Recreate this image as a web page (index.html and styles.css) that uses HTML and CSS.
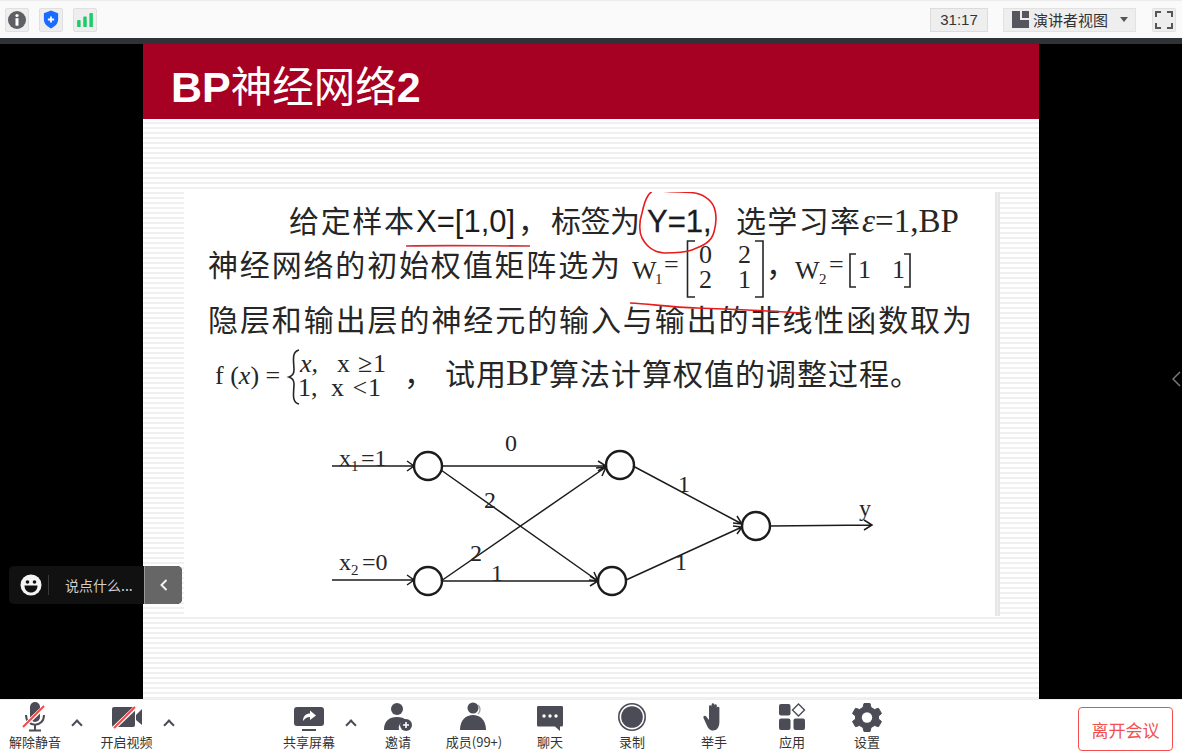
FILE: index.html
```html
<!DOCTYPE html>
<html lang="zh-CN">

<head>
    <meta charset="UTF-8">
    <meta name="viewport" content="width=device-width, initial-scale=1.0">
    <title>Meeting</title>
    <link rel="stylesheet" href="styles.css">
</head>

<body>
    <div class="topbar">
        <div class="topbar-left">
            <div class="top-btn">
                <svg width="20" height="20" viewBox="0 0 20 20">
                    <circle cx="10" cy="10" r="9" fill="#5f6066" />
                    <circle cx="10" cy="5.5" r="1.6" fill="#fff" />
                    <rect x="8.5" y="8.2" width="3" height="7.5" fill="#fff" />
                </svg>
            </div>
            <div class="top-btn">
                <svg width="16" height="19" viewBox="0 0 18 20">
                    <path d="M9 0 L17 3 V10 C17 15 13 18 9 20 C5 18 1 15 1 10 V3 Z" fill="#1a6bff" />
                    <path d="M9 6.5 V13.5 M5.5 10 H12.5" stroke="#fff" stroke-width="2" />
                </svg>
            </div>
            <div class="top-btn">
                <svg width="16" height="14" viewBox="0 0 18 16">
                    <rect x="0" y="8" width="4" height="8" rx="1" fill="#1ecb6b" />
                    <rect x="7" y="4" width="4" height="12" rx="1" fill="#1ecb6b" />
                    <rect x="14" y="0" width="4" height="16" rx="1" fill="#1ecb6b" />
                </svg>
            </div>
        </div>
        <div class="topbar-right">
            <div class="timer">31:17</div>
            <div class="view-select">
                <svg width="17" height="17" viewBox="0 0 17 17">
                    <path d="M0 0 H8 V9 H17 V17 H0 Z" fill="#56575e" />
                    <rect x="10" y="0" width="7" height="7" fill="#56575e" />
                </svg>
                <span>演讲者视图</span>
                <i class="select-caret"></i>
            </div>
            <div class="top-btn">
                <svg width="18" height="18" viewBox="0 0 18 18" fill="none" stroke="#55565c" stroke-width="2">
                    <path d="M1 6 V1 H6 M12 1 H17 V6 M17 12 V17 H12 M6 17 H1 V12" />
                </svg>
            </div>
        </div>
    </div>

    <div class="stage">
        <div class="slide">
            <div class="slide-head">
                <h1 class="slide-title"><b>BP</b>神经网络<b>2</b></h1>
            </div>
            <div class="paper">
                <svg class="paper-art" width="811" height="424" viewBox="184 192 811 424">
                    <!-- 题目文字 -->
                    <text class="cn" x="289" y="232" textLength="125">给定样本</text>
                    <text class="sans" x="416" y="232">X=[1,0]</text>
                    <text class="cn" x="518" y="232">，</text>
                    <text class="cn" x="551" y="232" textLength="89">标签为</text>
                    <text class="sans strong" x="647" y="232">Y=1,</text>
                    <text class="cn" x="736" y="232" textLength="124">选学习率</text>
                    <text class="serif big" x="862" y="232"><tspan font-style="italic">ε</tspan>=1,BP</text>

                    <text class="cn" x="208" y="276" textLength="412">神经网络的初始权值矩阵选为</text>
                    <text class="serif math" x="632" y="279">W</text>
                    <text class="serif sub" x="655" y="284">1</text>
                    <text class="serif math" x="664" y="273">=</text>
                    <path class="bracket" d="M695 241 H687.5 V297 H695" />
                    <text class="serif math" x="699" y="263">0</text>
                    <text class="serif math" x="738" y="263">2</text>
                    <text class="serif math" x="699" y="288">2</text>
                    <text class="serif math" x="738" y="288">1</text>
                    <path class="bracket" d="M755 241 H763 V297 H755" />
                    <text class="cn" x="766" y="276">，</text>
                    <text class="serif math" x="795" y="279">W</text>
                    <text class="serif sub" x="819" y="284">2</text>
                    <text class="serif math" x="829" y="273">=</text>
                    <path class="bracket" d="M856 254 H850 V287 H856" />
                    <text class="serif math" x="858" y="278">1</text>
                    <text class="serif math" x="892" y="278">1</text>
                    <path class="bracket" d="M904 254 H910 V287 H904" />

                    <text class="cn" x="208" y="331" textLength="764">隐层和输出层的神经元的输入与输出的非线性函数取为</text>

                    <text class="serif math" x="215" y="384">f (<tspan font-style="italic">x</tspan>) =</text>
                    <path class="bracket" d="M299 350 C291 352 294 362 294 370 C294 374 292 376 289 377 C292 378 294 380 294 384 C294 392 291 402 299 404" />
                    <text class="serif math" x="300" y="372" font-style="italic">x,</text>
                    <text class="serif math" x="337" y="372" textLength="49">x ≥1</text>
                    <text class="serif math" x="298" y="396">1,</text>
                    <text class="serif math" x="331" y="396" textLength="50">x &lt;1</text>
                    <text class="cn" x="404" y="385">，</text>
                    <text class="cn" x="445" y="385" textLength="61">试用</text>
                    <text class="serif wide" x="506" y="385">BP</text>
                    <text class="cn" x="549" y="385" textLength="371">算法计算权值的调整过程。</text>

                    <!-- 网络图 -->
                    <g class="net">
                        <circle cx="428" cy="466" r="14" />
                        <circle cx="428" cy="581" r="14" />
                        <circle cx="620" cy="465" r="14" />
                        <circle cx="612" cy="581" r="14" />
                        <circle cx="756" cy="526" r="14" />
                        <path d="M332 466 H414 M407 461 L414 466 L407 471" />
                        <path d="M332 580 H414 M407 575 L414 580 L407 585" />
                        <path d="M442 466 H606 M598 461 L606 466 L598 471" />
                        <path d="M441 470 L598 581 M589 580 L598 581 L594 572" />
                        <path d="M441 581 L606 467 M596 468 L606 467 L602 476" />
                        <path d="M442 581 H598 M590 576 L598 581 L590 586" />
                        <path d="M633 466 L742 524 M733 523 L742 524 L737 516" />
                        <path d="M626 580 L742 527 M733 526 L742 527 L737 534" />
                        <path d="M770 526 L872 525 M864 520 L872 525 L864 530" />
                    </g>
                    <text class="serif label" x="339" y="466">x</text>
                    <text class="serif tiny" x="351" y="471">1</text>
                    <text class="serif label" x="361" y="466">=1</text>
                    <text class="serif label" x="339" y="570">x</text>
                    <text class="serif tiny" x="351" y="575">2</text>
                    <text class="serif label" x="362" y="570">=0</text>
                    <text class="serif label" x="505" y="451">0</text>
                    <text class="serif label" x="484" y="508">2</text>
                    <text class="serif label" x="470" y="561">2</text>
                    <text class="serif label" x="491" y="581">1</text>
                    <text class="serif label" x="678" y="492">1</text>
                    <text class="serif label" x="675" y="570">1</text>
                    <text class="serif label" x="859" y="516">y</text>

                    <!-- 红笔批注 -->
                    <g class="ink">
                        <path d="M406 246 C450 245 490 246 530 246" stroke="#d22f3a" />
                        <path d="M655 190 C647 192 644 204 642 213 C639 222 639 232 642 238 C647 247 653 252 664 253 C675 253 684 253 692 250 C702 246 711 243 714 232 C717 222 717 209 711 202 C704 194 696 192 680 192 C670 192 660 191 655 190" />
                        <path d="M630 303 C650 304 670 307 697 308 C730 309 770 311 801 313" />
                    </g>
                </svg>
                <div class="paper-edge"></div>
            </div>
        </div>

        <div class="chat-pill">
            <svg width="22" height="22" viewBox="0 0 22 22">
                <circle cx="11" cy="11" r="10.5" fill="#f4f4f4" />
                <circle cx="7.5" cy="8" r="1.8" fill="#111" />
                <circle cx="14.5" cy="8" r="1.8" fill="#111" />
                <path d="M4.5 11.5 H17.5 C17.5 16 14.5 18.5 11 18.5 C7.5 18.5 4.5 16 4.5 11.5 Z" fill="#111" />
            </svg>
            <span class="chat-text">说点什么...</span>
            <div class="chat-toggle">
                <svg width="8" height="12" viewBox="0 0 8 12" fill="none" stroke="#f2f2f2" stroke-width="2">
                    <path d="M6.5 1 L1.5 6 L6.5 11" />
                </svg>
            </div>
        </div>

        <svg class="side-arrow" width="9" height="16" viewBox="0 0 9 16" fill="none" stroke="#77797e" stroke-width="1.5">
            <path d="M8 1 L1 8 L8 15" />
        </svg>
    </div>

    <div class="toolbar">
        <div class="tool-group left-group">
            <div class="tool">
                <svg width="26" height="30" viewBox="0 0 26 30">
                    <rect x="8" y="0" width="10" height="20" rx="5" fill="#4b4c55" />
                    <path d="M4 13 C4 26 22 26 22 13" fill="none" stroke="#4b4c55" stroke-width="2" />
                    <path d="M13 23 V28 M7 28.5 H19" stroke="#4b4c55" stroke-width="2" />
                    <path d="M1 25 L23 4" stroke="#fff" stroke-width="4" />
                    <path d="M1 25 L22 4" stroke="#f04848" stroke-width="2" />
                </svg>
                <span>解除静音</span>
            </div>
            <div class="caret"></div>
            <div class="tool tool-video">
                <svg width="30" height="30" viewBox="0 0 30 30">
                    <rect x="0" y="5" width="23" height="20" rx="2" fill="#4b4c55" />
                    <path d="M24 13 L30 7 V23 L24 18 Z" fill="#4b4c55" />
                    <path d="M2 26 L24 5" stroke="#fff" stroke-width="4" />
                    <path d="M2 26 L23 5" stroke="#f04848" stroke-width="2" />
                </svg>
                <span>开启视频</span>
            </div>
            <div class="caret"></div>
        </div>

        <div class="tool-group center-group">
            <div class="tool">
                <svg width="30" height="30" viewBox="0 0 30 30">
                    <rect x="0" y="5" width="30" height="19" rx="3" fill="#4b4c55" />
                    <path d="M9 19 C9 14 12 11.5 16 11.5 V8.5 L22 13.5 L16 18 V15 C13 15 11 16.5 9 19 Z" fill="#fff" />
                    <rect x="8" y="27" width="14" height="2" fill="#4b4c55" />
                </svg>
                <span>共享屏幕</span>
            </div>
            <div class="caret"></div>
            <div class="tool">
                <svg width="30" height="30" viewBox="0 0 30 30">
                    <circle cx="14" cy="7" r="6" fill="#4b4c55" />
                    <path d="M1 28 C1 19 6 15 14 15 C18 15 21 16 23 18 A8 8 0 0 0 16 28 Z" fill="#4b4c55" />
                    <circle cx="23" cy="23" r="6" fill="#4b4c55" />
                    <path d="M23 20 V26 M20 23 H26" stroke="#fff" stroke-width="1.6" />
                </svg>
                <span>邀请</span>
            </div>
            <div class="tool">
                <svg width="30" height="30" viewBox="0 0 30 30">
                    <circle cx="14" cy="6" r="5.5" fill="#4b4c55" />
                    <path d="M19 3 A6 6 0 0 1 19 12" fill="none" stroke="#9a9ba1" stroke-width="1.2" />
                    <path d="M1 28 C1 18 7 13 14 13 C21 13 27 18 27 28 Z" fill="#4b4c55" />
                </svg>
                <span>成员(99+)</span>
            </div>
            <div class="tool">
                <svg width="30" height="30" viewBox="0 0 30 30">
                    <path d="M3 4 H27 A1.5 1.5 0 0 1 28 5.5 V23 A1.5 1.5 0 0 1 27 24.5 H25 V29 L20 24.5 H3 A1.5 1.5 0 0 1 2 23 V5.5 A1.5 1.5 0 0 1 3 4 Z" fill="#4b4c55" />
                    <circle cx="9" cy="14" r="1.7" fill="#fff" />
                    <circle cx="15" cy="14" r="1.7" fill="#fff" />
                    <circle cx="21" cy="14" r="1.7" fill="#fff" />
                </svg>
                <span>聊天</span>
            </div>
            <div class="tool">
                <svg width="30" height="30" viewBox="0 0 30 30">
                    <circle cx="15" cy="15" r="13.2" fill="none" stroke="#4b4c55" stroke-width="1.6" />
                    <circle cx="15" cy="15" r="10.8" fill="#4b4c55" />
                </svg>
                <span>录制</span>
            </div>
            <div class="tool">
                <svg width="30" height="30" viewBox="0 0 30 30">
                    <path d="M10 13 V4.5 A1.3 1.3 0 0 1 12.6 4.5 V12 V2.5 A1.3 1.3 0 0 1 15.2 2.5 V12 V3.5 A1.3 1.3 0 0 1 17.8 3.5 V12 V6 A1.3 1.3 0 0 1 20.4 6 V20 C20.4 25 18 28.5 14 28.5 C10.5 28.5 9 26 7.5 22.5 L4.5 16 C3.8 14 6 13 7.2 14.5 L10 18 Z" fill="#4b4c55" />
                </svg>
                <span>举手</span>
            </div>
            <div class="tool">
                <svg width="30" height="30" viewBox="0 0 30 30">
                    <rect x="2" y="2" width="11.5" height="11.5" rx="2" fill="#4b4c55" />
                    <rect x="2" y="16.5" width="11.5" height="11.5" rx="2" fill="#4b4c55" />
                    <rect x="16.5" y="16.5" width="11.5" height="11.5" rx="2" fill="#4b4c55" />
                    <path d="M21.5 2 L27.5 8 L21.5 14 L15.5 8 Z" fill="none" stroke="#4b4c55" stroke-width="1.4" />
                </svg>
                <span>应用</span>
            </div>
            <div class="tool">
                <svg width="30" height="30" viewBox="0 0 30 30">
                    <path d="M12 1.5 H18 L19 5.5 L22.5 7.5 L26.5 6.3 L29.5 11.5 L26.5 14 V17 L29.5 19.5 L26.5 24.7 L22.5 23.5 L19 25.5 L18 29.5 H12 L11 25.5 L7.5 23.5 L3.5 24.7 L0.5 19.5 L3.5 17 V14 L0.5 11.5 L3.5 6.3 L7.5 7.5 L11 5.5 Z" fill="#4b4c55" stroke="#4b4c55" stroke-linejoin="round" />
                    <circle cx="15" cy="15.5" r="5.2" fill="#fff" />
                </svg>
                <span>设置</span>
            </div>
        </div>

        <button class="leave-btn">离开会议</button>
    </div>
</body>

</html>
```

FILE: styles.css
```css
* {
    padding: 0;
    margin: 0;
    box-sizing: border-box;
}

body {
    width: 1182px;
    height: 752px;
    overflow: hidden;
    background-color: #fff;
    font-family: "Noto Sans CJK SC", "Liberation Sans", sans-serif;
}

.topbar {
    height: 44px;
    display: flex;
    justify-content: space-between;
    align-items: center;
    background-color: #fafafa;
    border-top: 1px solid #ececec;
    border-bottom: 6px solid #2f3237;
}

.topbar-left,
.topbar-right {
    display: flex;
    align-items: center;
}

.topbar-left {
    padding-left: 5px;
    gap: 10px;
}

.topbar-right {
    padding-right: 6px;
}

.top-btn {
    width: 24px;
    height: 24px;
    display: flex;
    align-items: center;
    justify-content: center;
    background-color: #eeeeee;
    border: 1px solid #e0e0e0;
    border-radius: 2px;
}

.timer {
    width: 58px;
    height: 24px;
    line-height: 22px;
    text-align: center;
    font-family: "Liberation Sans", sans-serif;
    font-size: 15px;
    color: #333;
    background-color: #eeeeee;
    border: 1px solid #dcdcdc;
}

.view-select {
    width: 133px;
    height: 24px;
    margin: 0 16px 0 15px;
    padding-left: 8px;
    display: flex;
    align-items: center;
    font-size: 15px;
    color: #333;
    background-color: #eeeeee;
    border: 1px solid #e2e2e2;
}

.view-select span {
    margin-left: 4px;
    line-height: 20px;
}

.select-caret {
    margin-left: 12px;
    border-left: 4px solid transparent;
    border-right: 4px solid transparent;
    border-top: 5px solid #55565c;
}

.stage {
    position: relative;
    height: 655px;
    display: flex;
    justify-content: center;
    background-color: #000;
}

.slide {
    width: 896px;
    display: flex;
    flex-direction: column;
    background: repeating-linear-gradient(#fff 0 3px, #f0f0f0 3px 5px);
}

.slide-head {
    height: 75px;
    padding: 9px 0 0 28px;
    display: flex;
    align-items: center;
    background-color: #a60022;
}

.slide-title {
    font-size: 41.5px;
    font-weight: 400;
    line-height: 1;
    color: #fff;
}

.slide-title b {
    font-family: "Liberation Sans", sans-serif;
    font-weight: 700;
    font-size: 43px;
}

.paper {
    display: flex;
    width: 816px;
    height: 424px;
    margin: 73px 0 0 41px;
}

.paper-art {
    display: block;
    background-color: #fff;
}

.paper-edge {
    width: 5px;
    background: repeating-linear-gradient(90deg, #e6e6e6 0 2px, #f0f0f0 2px 3px);
}

.paper-art .cn {
    font-family: "Noto Sans CJK SC", sans-serif;
    font-size: 30px;
    fill: #262626;
}

.paper-art .sans {
    font-family: "Liberation Sans", sans-serif;
    font-size: 31px;
    fill: #1c1c1c;
}

.paper-art .strong {
    stroke: #1c1c1c;
    stroke-width: 0.3px;
}

.paper-art .serif {
    font-family: "Liberation Serif", serif;
    fill: #262626;
}

.paper-art .big {
    font-size: 33px;
}

.paper-art .wide {
    font-size: 35px;
}

.paper-art .math {
    font-size: 26px;
}

.paper-art .sub {
    font-size: 15px;
}

.paper-art .label {
    font-size: 24px;
}

.paper-art .tiny {
    font-size: 15px;
}

.bracket {
    fill: none;
    stroke: #262626;
    stroke-width: 1.6;
}

.net {
    fill: none;
    stroke: #1c1c1c;
    stroke-width: 1.5;
}

.net circle {
    stroke-width: 2.4;
}

.ink {
    fill: none;
    stroke: #e81c1c;
    stroke-width: 1.6;
}

.chat-pill {
    position: absolute;
    left: 9px;
    top: 522px;
    width: 173px;
    height: 38px;
    padding-left: 11px;
    display: flex;
    align-items: center;
    border-radius: 5px;
    background-color: #111;
}

.chat-text {
    height: 20px;
    margin-left: 6px;
    padding-left: 16px;
    line-height: 20px;
    font-size: 14px;
    color: #d0d0d0;
    border-left: 1px solid #3a3a3a;
}

.chat-toggle {
    position: absolute;
    right: 0;
    top: 0;
    width: 38px;
    height: 38px;
    display: flex;
    align-items: center;
    justify-content: center;
    background-color: #666;
    border-left: 1px solid #999;
    border-radius: 0 5px 5px 0;
}

.side-arrow {
    position: absolute;
    right: 1px;
    top: 327px;
}

.toolbar {
    height: 53px;
    display: flex;
    background-color: #fff;
    border-top: 1px solid #eeeeee;
}

.tool-group {
    display: grid;
    height: 52px;
}

.left-group {
    grid-template-columns: 70px 14px 78px 14px;
}

.left-group .tool-video {
    padding-left: 7px;
}

.center-group {
    margin-left: 98px;
    grid-template-columns: 70px 14px 80px 72px 80px 84px 80px 76px 74px;
}

.tool {
    display: flex;
    flex-direction: column;
    align-items: center;
    font-size: 13px;
    line-height: 18px;
    color: #333;
    white-space: nowrap;
}

.tool svg {
    height: 30px;
    margin-top: 2px;
    margin-bottom: 1px;
}

.caret {
    width: 8px;
    height: 8px;
    margin: 21px 0 0 3px;
    border-left: 2px solid #4b4c55;
    border-top: 2px solid #4b4c55;
    transform: rotate(45deg);
}

.leave-btn {
    width: 95px;
    height: 44px;
    margin: 7px 0 0 174px;
    font-family: "Noto Sans CJK SC", sans-serif;
    font-size: 17px;
    color: #f25050;
    background-color: #fff;
    border: 1px solid #f25050;
    border-radius: 4px;
}
```
